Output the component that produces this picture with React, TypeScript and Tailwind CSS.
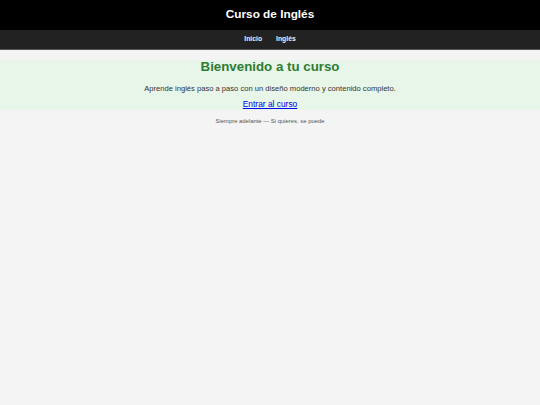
export default function App() {
  return (
    <div className="min-h-[405px] bg-[#f4f4f4] font-['Liberation_Sans',Arial,sans-serif]">
      <header className="h-[30px] bg-black flex items-center justify-center">
        <h1 className="text-[11.8px] leading-none font-bold text-white">Curso de Inglés</h1>
      </header>
      <nav className="h-[20px] bg-[#222] border-b border-[#555] flex items-center justify-center gap-[14px]">
        <a href="#" className="text-[6.8px] leading-none font-bold text-[#eee] no-underline">
          Inicio
        </a>
        <a href="#" className="text-[6.8px] leading-none font-bold text-[#eee] no-underline">
          Inglés
        </a>
      </nav>
      <main className="pt-[10px]">
        <section className="bg-[#e8f5e9] text-center pb-[1px] flex flex-col items-center">
          <h2 className="text-[13.3px] leading-[13.3px] font-bold text-[#2e7d32] mt-[0.4px]">
            Bienvenido a tu curso
          </h2>
          <p className="text-[7.6px] leading-[9px] text-[#333] mt-[10px]">
            Aprende inglés paso a paso con un diseño moderno y contenido completo.
          </p>
          <a href="#" className="text-[8.4px] leading-[10px] text-[#0000ee] underline mt-[6px]">
            Entrar al curso
          </a>
        </section>
        <footer className="text-center mt-[8px]">
          <p className="text-[5.9px] leading-[7px] text-[#555]">Siempre adelante — Si quieres, se puede</p>
        </footer>
      </main>
    </div>
  );
}
